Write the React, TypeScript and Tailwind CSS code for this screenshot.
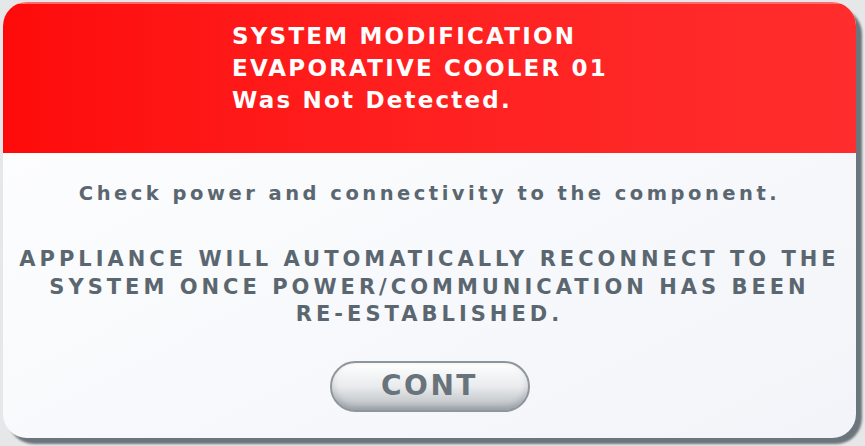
import React from "react";

export default function App() {
  return (
    <div className="w-[865px] h-[446px] bg-[#e6e7e8] relative overflow-hidden" style={{ fontFamily: '"DejaVu Sans", "Liberation Sans", sans-serif' }}>
      <div className="absolute left-[3px] top-[2px] w-[854px] h-[436px] rounded-[26px] bg-[#6b757b] translate-x-[5px] translate-y-[6px] blur-[1px]" />
      <div className="absolute left-[3px] top-[2px] w-[853px] h-[436px] rounded-[24px] overflow-hidden flex flex-col bg-gradient-to-br from-[#ffffff] to-[#f2f4f9]">
        <div className="h-[151px] bg-gradient-to-r from-[#fe0a0a] to-[#ff2d2d] shrink-0 pl-[229px] pt-[16px] text-white font-bold text-[23px] leading-[32px] tracking-[2.2px] border-t-2 border-[#ff6a6a]">
          <div>SYSTEM MODIFICATION</div>
          <div>EVAPORATIVE COOLER 01</div>
          <div>Was Not Detected.</div>
        </div>
        <div className="flex flex-col items-center text-[#5b6770] font-bold">
          <div className="mt-[27px] text-[19.5px] leading-[28px] tracking-[3.5px]">Check power and connectivity to the component.</div>
          <div className="mt-[38px] text-[21px] leading-[27.5px] tracking-[4px] text-center">
            <div>APPLIANCE WILL AUTOMATICALLY RECONNECT TO THE</div>
            <div>SYSTEM ONCE POWER/COMMUNICATION HAS BEEN</div>
            <div>RE-ESTABLISHED.</div>
          </div>
          <div className="mt-[32px] w-[200px] h-[51px] rounded-full border-2 border-[#8e969c] bg-gradient-to-b from-[#ffffff] via-[#e9ebed] to-[#b6bbbf] shadow-[inset_0_-3px_6px_rgba(80,90,100,0.35),inset_0_3px_4px_rgba(255,255,255,0.9)] flex items-center justify-center text-[28px] tracking-[2.5px] text-[#68737b]">
            CONT
          </div>
        </div>
      </div>
    </div>
  );
}
